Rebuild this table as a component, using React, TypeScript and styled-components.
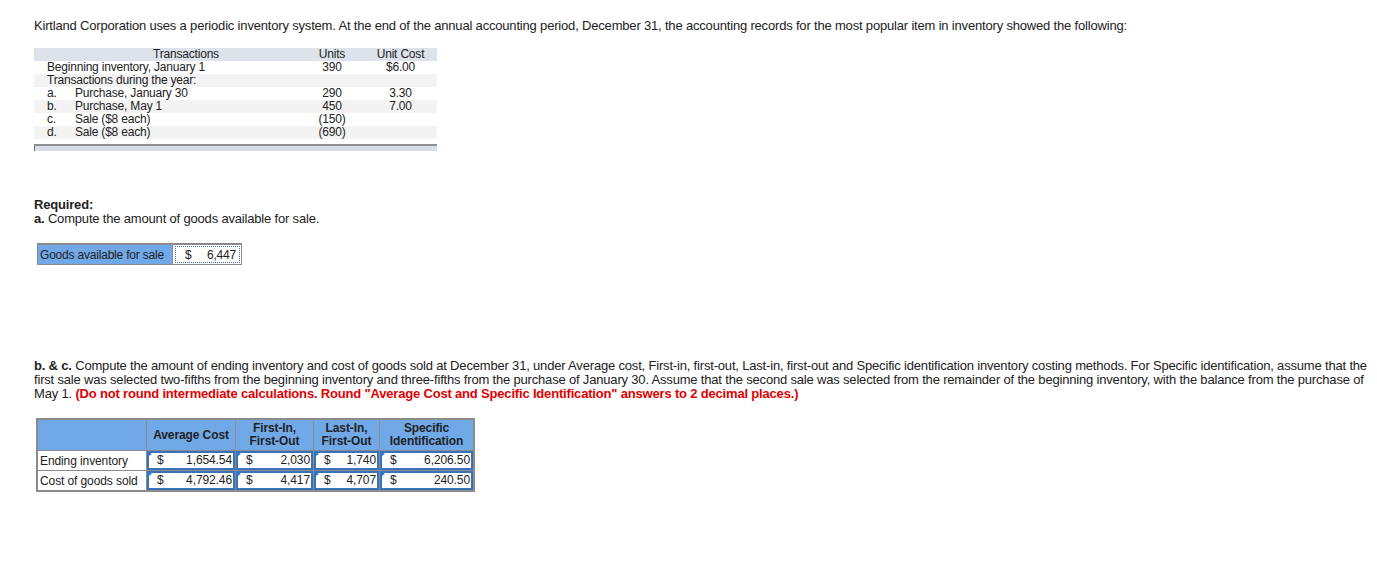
import styled, { createGlobalStyle } from 'styled-components'

const GlobalStyle = createGlobalStyle`
  html, body {
    margin: 0;
    padding: 0;
    background: #fff;
  }
  body {
    font-family: 'Liberation Sans', Arial, sans-serif;
    color: #222;
  }
`

// ---- Layout ----
const Page = styled.div`
  padding: 19px 8px 40px 34px;
`

const Para = styled.p<{ $top?: number }>`
  margin: ${({ $top }) => $top ?? 0}px 0 0 0;
  font-size: 13px;
  line-height: 14px;
  letter-spacing: -0.18px;
`

const Bold = styled.b``

const RedNote = styled.b`
  color: #e00000;
`

// ---- Transactions table ----
const TxTable = styled.table`
  margin-top: 15px;
  width: 403px;
  border-collapse: collapse;
  font-size: 12px;
  line-height: 13px;
  letter-spacing: -0.2px;
  table-layout: fixed;
`

const TxRow = styled.tr<{ $shade?: 'head' | 'alt' | 'none' }>`
  height: 13px;
  background: ${({ $shade }) =>
    $shade === 'head' ? '#dee2eb' : $shade === 'alt' ? '#f3f3f3' : '#fff'};
`

const TxCell = styled.td<{ $align?: 'left' | 'center'; $pad?: number }>`
  padding: 0 0 0 ${({ $pad }) => $pad ?? 0}px;
  text-align: ${({ $align }) => $align ?? 'left'};
  white-space: nowrap;
  vertical-align: middle;
`

const TxFooter = styled.div`
  margin-top: 5px;
  width: 402px;
  height: 5px;
  background: #d9dde7;
  border-top: 2px solid #8d8f94;
  border-left: 1px solid #6f7177;
`

// ---- Goods available ----
const GoodsBox = styled.div`
  margin-top: 17px;
  margin-left: 3px;
  display: flex;
  width: fit-content;
  border: 1px solid #8b8b8b;
  border-top-width: 2px;
  font-size: 12px;
  letter-spacing: -0.2px;
`

const GoodsLabel = styled.div`
  background: #70a8e8;
  padding: 3px 8px 2px 2px;
  height: 14px;
  line-height: 14px;
  border-right: 1px solid #8b8b8b;
`

const GoodsValue = styled.div`
  width: 51px;
  display: flex;
  justify-content: space-between;
  align-items: center;
  margin: 1px 1px 1px 2px;
  padding: 0 3px 0 9px;
  border: 1px dotted #3f74c4;
  line-height: 14px;
`

// ---- Costing table ----
const CostTable = styled.table`
  margin-top: 17px;
  margin-left: 2px;
  border-collapse: collapse;
  table-layout: fixed;
  font-size: 12px;
  letter-spacing: -0.1px;
  border: 2px solid #8b8b8b;
`

const HeadCell = styled.th<{ $w: number }>`
  width: ${({ $w }) => $w}px;
  height: 30px;
  padding: 0;
  background: #70a8e8;
  border: 1px solid #8b8b8b;
  font-weight: bold;
  line-height: 13px;
  text-align: center;
  vertical-align: middle;
`

const LabelCell = styled.td`
  height: 19px;
  padding: 0 0 0 2px;
  border: 1px solid #8b8b8b;
  white-space: nowrap;
`

const InputCell = styled.td`
  height: 19px;
  padding: 0;
  border: 1px solid #8b8b8b;
`

const InputBox = styled.div`
  position: relative;
  height: 15px;
  display: flex;
  align-items: center;
  justify-content: space-between;
  padding: 0 1px 0 8px;
  border: 2px solid #3a72b8;
  background: #fff;
  line-height: 15px;

  &::before {
    content: '';
    position: absolute;
    top: -2px;
    left: -2px;
    border-top: 3px solid transparent;
    border-bottom: 3px solid transparent;
    border-left: 5px solid #2a78d6;
  }
`

const rows = [
  { label: 'Ending inventory', values: ['1,654.54', '2,030', '1,740', '6,206.50'] },
  { label: 'Cost of goods sold', values: ['4,792.46', '4,417', '4,707', '240.50'] },
]

export default function App() {
  return (
    <Page>
      <GlobalStyle />
      <Para>
        Kirtland Corporation uses a periodic inventory system. At the end of the annual accounting
        period, December 31, the accounting records for the most popular item in inventory showed
        the following:
      </Para>

      <TxTable>
        <colgroup>
          <col style={{ width: 38 }} />
          <col style={{ width: 228 }} />
          <col style={{ width: 64 }} />
          <col style={{ width: 73 }} />
        </colgroup>
        <tbody>
          <TxRow $shade="head">
            <TxCell />
            <TxCell $align="center">Transactions</TxCell>
            <TxCell $align="center">Units</TxCell>
            <TxCell $align="center">Unit Cost</TxCell>
          </TxRow>
          <TxRow>
            <TxCell colSpan={2} $pad={13}>Beginning inventory, January 1</TxCell>
            <TxCell $align="center">390</TxCell>
            <TxCell $align="center">$6.00</TxCell>
          </TxRow>
          <TxRow $shade="alt">
            <TxCell colSpan={2} $pad={13}>Transactions during the year:</TxCell>
            <TxCell />
            <TxCell />
          </TxRow>
          <TxRow>
            <TxCell $pad={13}>a.</TxCell>
            <TxCell $pad={3}>Purchase, January 30</TxCell>
            <TxCell $align="center">290</TxCell>
            <TxCell $align="center">3.30</TxCell>
          </TxRow>
          <TxRow $shade="alt">
            <TxCell $pad={13}>b.</TxCell>
            <TxCell $pad={3}>Purchase, May 1</TxCell>
            <TxCell $align="center">450</TxCell>
            <TxCell $align="center">7.00</TxCell>
          </TxRow>
          <TxRow>
            <TxCell $pad={13}>c.</TxCell>
            <TxCell $pad={3}>Sale ($8 each)</TxCell>
            <TxCell $align="center">(150)</TxCell>
            <TxCell />
          </TxRow>
          <TxRow $shade="alt">
            <TxCell $pad={13}>d.</TxCell>
            <TxCell $pad={3}>Sale ($8 each)</TxCell>
            <TxCell $align="center">(690)</TxCell>
            <TxCell />
          </TxRow>
        </tbody>
      </TxTable>
      <TxFooter />

      <Para $top={47}>
        <Bold>Required:</Bold>
      </Para>
      <Para>
        <Bold>a.</Bold> Compute the amount of goods available for sale.
      </Para>

      <GoodsBox>
        <GoodsLabel>Goods available for sale</GoodsLabel>
        <GoodsValue>
          <span>$</span>
          <span>6,447</span>
        </GoodsValue>
      </GoodsBox>

      <Para $top={94}>
        <Bold>b. &amp; c.</Bold> Compute the amount of ending inventory and cost of goods sold at
        December 31, under Average cost, First-in, first-out, Last-in, first-out and Specific
        identification inventory costing methods. For Specific identification, assume that the
        first sale was selected two-fifths from the beginning inventory and three-fifths from the
        purchase of January 30. Assume that the second sale was selected from the remainder of the
        beginning inventory, with the balance from the purchase of May 1.{' '}
        <RedNote>
          (Do not round intermediate calculations. Round "Average Cost and Specific Identification"
          answers to 2 decimal places.)
        </RedNote>
      </Para>

      <CostTable>
        <thead>
          <tr>
            <HeadCell $w={108} />
            <HeadCell $w={88}>Average Cost</HeadCell>
            <HeadCell $w={77}>
              First-In,
              <br />
              First-Out
            </HeadCell>
            <HeadCell $w={65}>
              Last-In,
              <br />
              First-Out
            </HeadCell>
            <HeadCell $w={93}>
              Specific
              <br />
              Identification
            </HeadCell>
          </tr>
        </thead>
        <tbody>
          {rows.map((r) => (
            <tr key={r.label}>
              <LabelCell>{r.label}</LabelCell>
              {r.values.map((v, i) => (
                <InputCell key={i}>
                  <InputBox>
                    <span>$</span>
                    <span>{v}</span>
                  </InputBox>
                </InputCell>
              ))}
            </tr>
          ))}
        </tbody>
      </CostTable>
    </Page>
  )
}
